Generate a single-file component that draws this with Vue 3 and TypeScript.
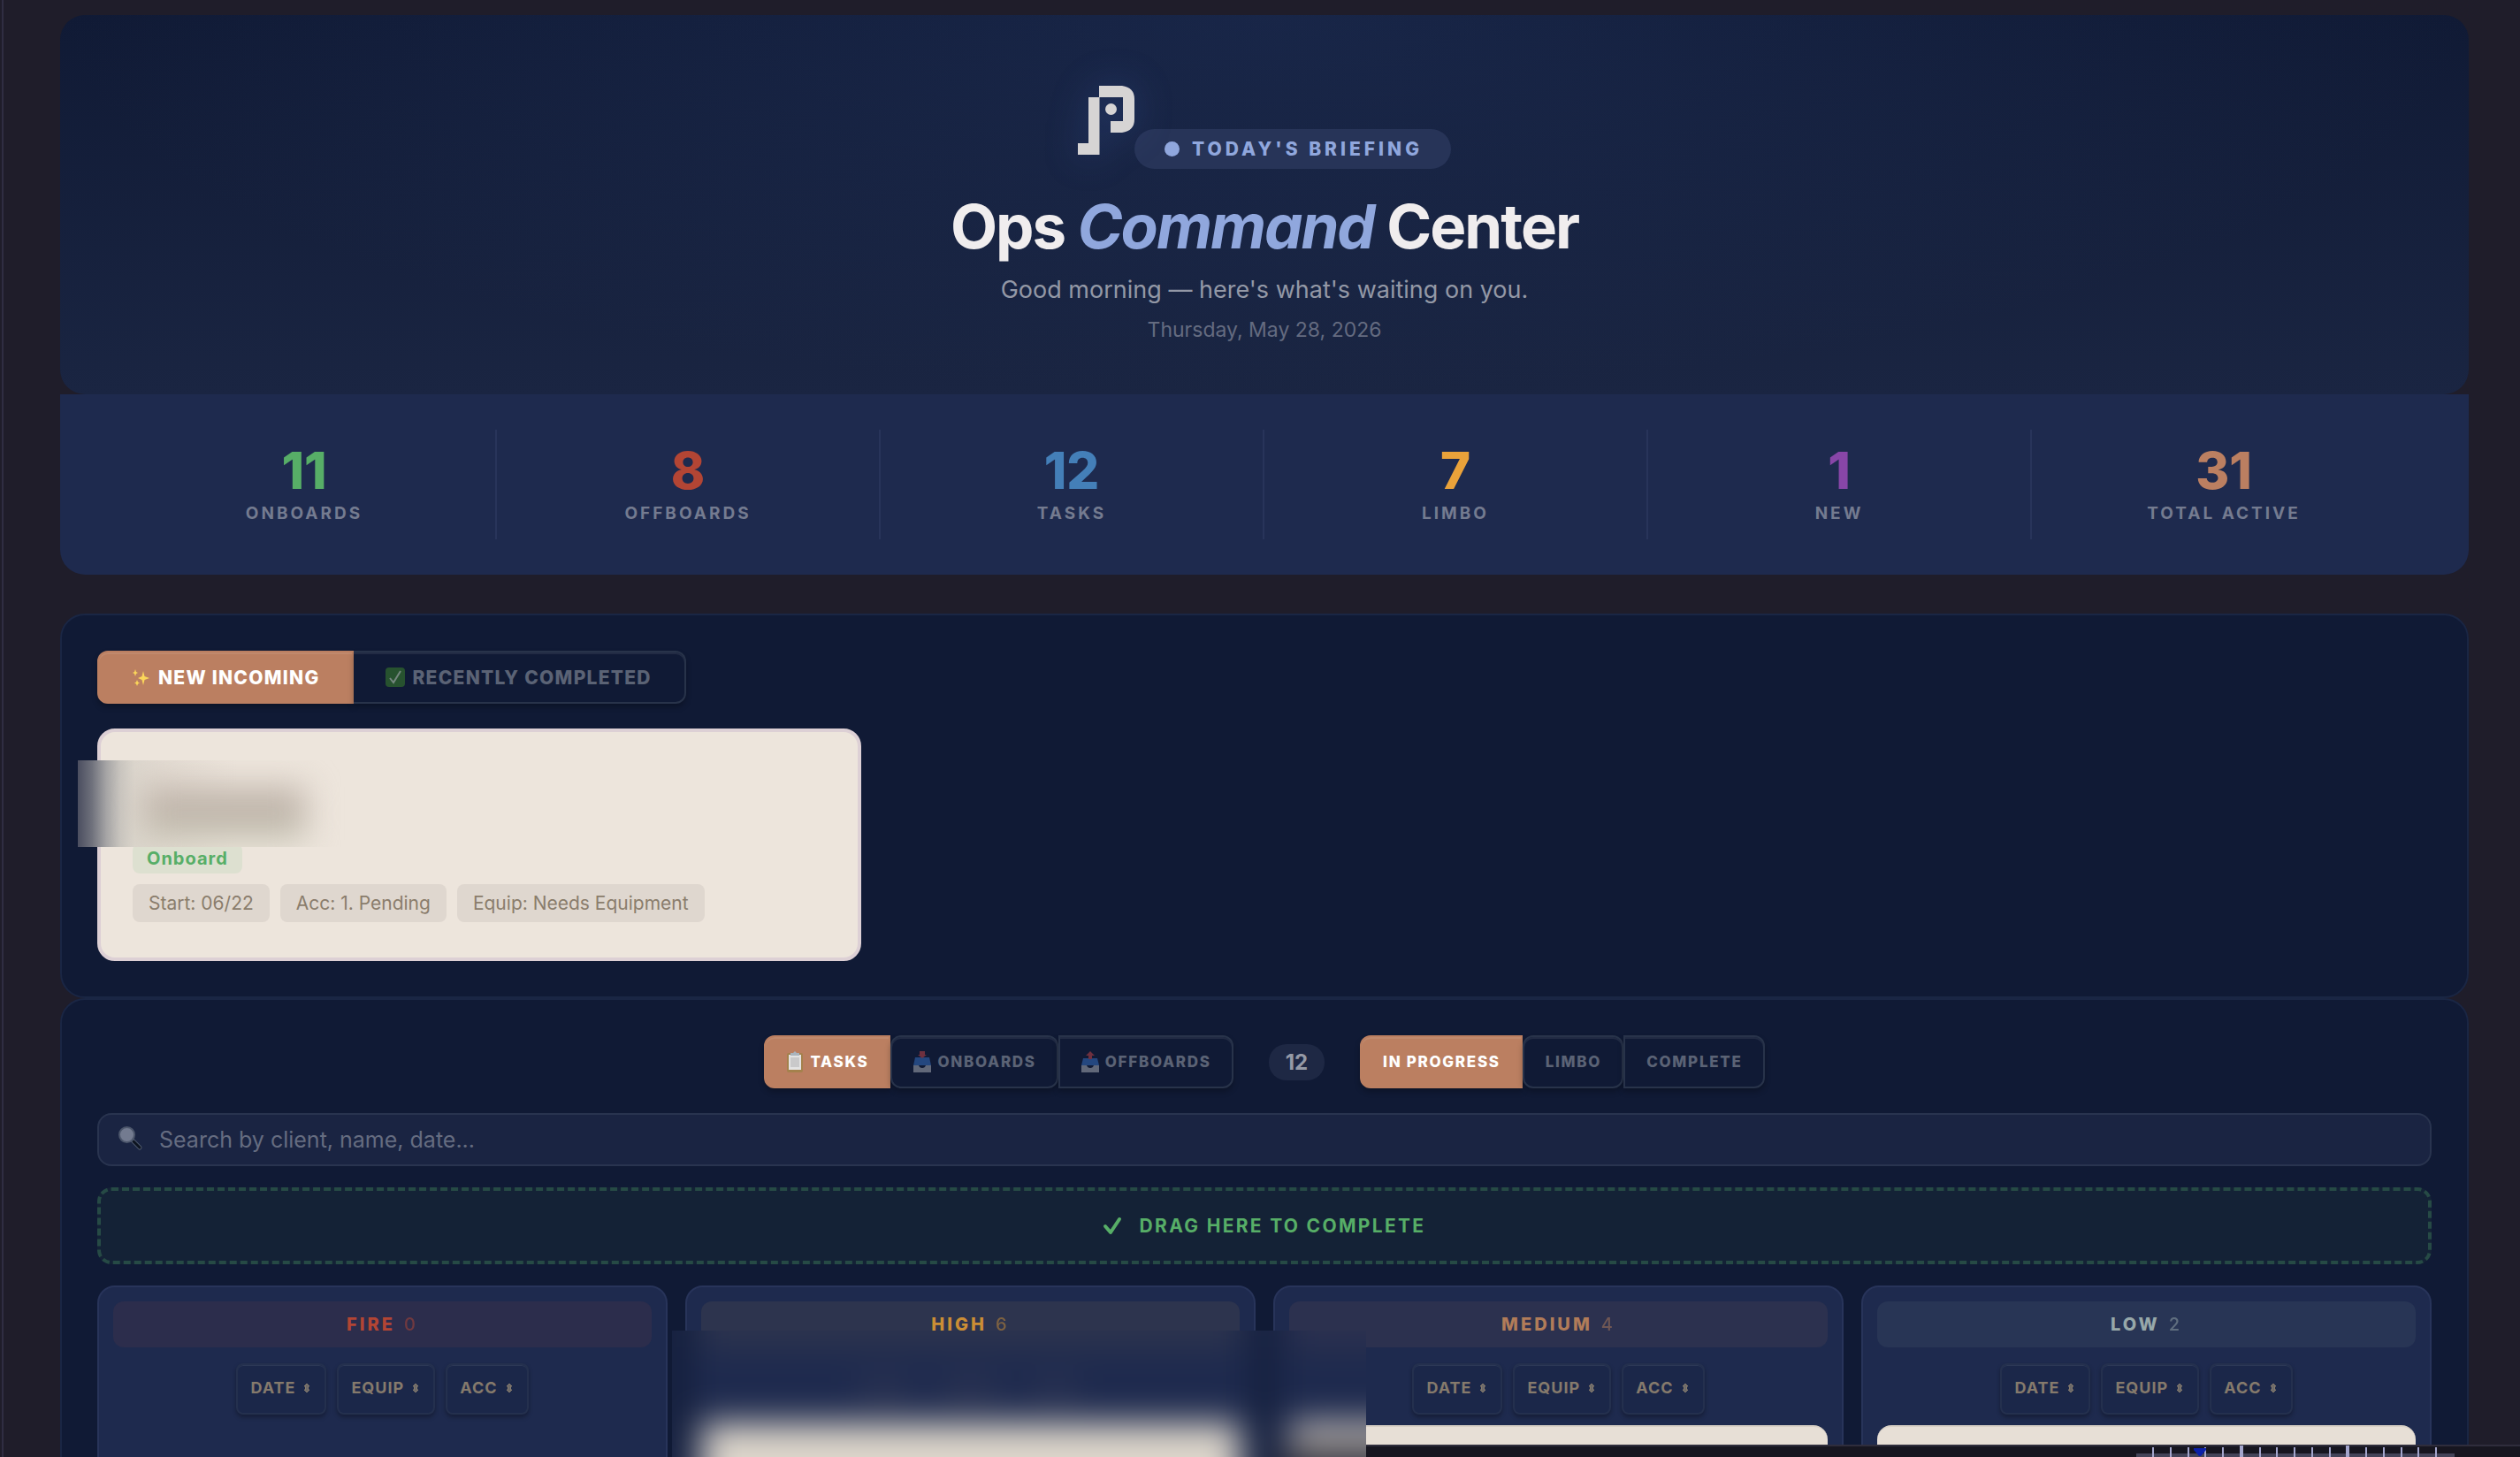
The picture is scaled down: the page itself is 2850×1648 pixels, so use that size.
<script setup lang="ts">
interface Stat { value: number; label: string; tone: string }
interface Column { name: string; count: number; tone: string; hasCard: boolean }

const stats: Stat[] = [
  { value: 11, label: 'ONBOARDS', tone: 'green' },
  { value: 8, label: 'OFFBOARDS', tone: 'red' },
  { value: 12, label: 'TASKS', tone: 'blue' },
  { value: 7, label: 'LIMBO', tone: 'amber' },
  { value: 1, label: 'NEW', tone: 'purple' },
  { value: 31, label: 'TOTAL ACTIVE', tone: 'copper' },
]
const details: string[] = ['Start: 06/22', 'Acc: 1. Pending', 'Equip: Needs Equipment']
const columns: Column[] = [
  { name: 'FIRE', count: 0, tone: 'fire', hasCard: false },
  { name: 'HIGH', count: 6, tone: 'high', hasCard: true },
  { name: 'MEDIUM', count: 4, tone: 'medium', hasCard: true },
  { name: 'LOW', count: 2, tone: 'low', hasCard: true },
]
const sorts: string[] = ['DATE', 'EQUIP', 'ACC']
const ticks: number[] = Array.from({ length: 17 }, (_, i) => i)
</script>

<template>
  <div class="page">
    <header class="hero">
      <div class="brand">
        <svg class="logo" viewBox="0 0 64 78" aria-hidden="true">
          <path d="M24 0H50Q64 2 64 15V38Q64 51 50 53H37V40H51V13H24Z" />
          <path d="M12 13H24.500V78H0V65H12Z" />
          <ellipse cx="37.500" cy="26.500" rx="6.500" ry="6.500" />
        </svg>
        <span class="briefing"><span class="dot"></span>TODAY'S BRIEFING</span>
      </div>
      <h1>Ops <em>Command</em> Center</h1>
      <p class="greeting">Good morning — here's what's waiting on you.</p>
      <p class="date">Thursday, May 28, 2026</p>
    </header>

    <section class="stats" aria-label="Totals">
      <div v-for="s in stats" :key="s.label" class="stat">
        <div class="value" :class="s.tone">{{ s.value }}</div>
        <div class="label">{{ s.label }}</div>
      </div>
    </section>

    <section class="panel incoming">
      <div class="tabs large">
        <button type="button" class="active">
          <svg class="ico-spark" viewBox="0 0 20 20" aria-hidden="true">
            <path fill="#fbd65a" d="M12 3L13.500 9L19 11L13.500 13L12 19L10.500 13L6 11L10.500 9ZM3 1L4 4L6 5L4 6L3 9L2 6L0 5L2 4ZM5 13L6 15.500L8 16.500L6 17.500L5 20L4 17.500L2 16.500L4 15.500Z" />
          </svg>NEW INCOMING</button>
        <button type="button">
          <svg class="ico-done" viewBox="0 0 22 22" aria-hidden="true">
            <rect width="22" height="22" rx="4" fill="#27522f" />
            <path d="M5 12L9 17L17 4" fill="none" stroke="#75867f" stroke-width="2" />
          </svg>RECENTLY COMPLETED</button>
      </div>
      <article class="client">
        <span class="kind">Onboard</span>
        <div class="details"><span v-for="d in details" :key="d">{{ d }}</span></div>
        <div class="veil"><div class="smudge"></div></div>
      </article>
    </section>

    <section class="panel board">
      <div class="controls">
        <div class="tabs">
          <button type="button" class="active">
            <svg class="ico-clip" viewBox="0 0 18 24" aria-hidden="true">
              <rect y="2" width="18" height="22" rx="2" fill="#a4814c" />
              <rect x="2" y="4" width="14" height="17" fill="#e3e3e3" />
              <rect x="4" y="7" width="10" height="11" fill="#c9c9ca" />
              <path d="M4 2H7L9 0L11 2H14V5H4Z" fill="#aab4bd" />
            </svg>TASKS</button>
          <button type="button">
            <svg class="ico-tray" viewBox="0 0 20 24" aria-hidden="true">
              <path d="M2 7H18L20 16H0Z" fill="#24477f" />
              <path d="M0 16H6Q7 19 10 19T14 16H20V24H0Z" fill="#616879" />
              <path d="M7 0H13V4H15L10 8L5 4H7Z" fill="#6e303f" />
            </svg>ONBOARDS</button>
          <button type="button">
            <svg class="ico-tray" viewBox="0 0 20 24" aria-hidden="true">
              <path d="M2 8H18L20 16H0Z" fill="#24477f" />
              <path d="M0 16H6Q7 19 10 19T14 16H20V24H0Z" fill="#616879" />
              <path d="M8 9V5H5L10 0L15 5H12V9Z" fill="#6e303f" />
            </svg>OFFBOARDS</button>
        </div>
        <span class="total">12</span>
        <div class="tabs">
          <button type="button" class="active">IN PROGRESS</button>
          <button type="button">LIMBO</button>
          <button type="button">COMPLETE</button>
        </div>
      </div>

      <label class="search">
        <svg class="ico-search" viewBox="0 0 26 26" aria-hidden="true">
          <path d="M16 16L24 24" stroke="#4d576c" stroke-width="5" stroke-linecap="round" />
          <path d="M17 17L24 24" stroke="#0d1420" stroke-width="3" stroke-linecap="round" />
          <circle cx="9.500" cy="9.500" r="8.500" fill="#737b90" stroke="#4d576c" stroke-width="2" />
        </svg>
        <input type="text" aria-label="Search" placeholder="Search by client, name, date..." />
      </label>

      <div class="drop">
        <svg class="ico-check" viewBox="0 0 20 20" aria-hidden="true">
          <path d="M2 10L8 17L18 2" fill="none" stroke="#57ae67" stroke-width="4" stroke-linecap="round" stroke-linejoin="round" />
        </svg>DRAG HERE TO COMPLETE
      </div>

      <div class="columns">
        <div v-for="c in columns" :key="c.name" class="column">
          <h2 :class="c.tone">{{ c.name }}<span>{{ c.count }}</span></h2>
          <div class="sorts">
            <button v-for="s in sorts" :key="s" type="button">{{ s }}
              <svg class="ico-sort" viewBox="0 0 8 12" aria-hidden="true">
                <path d="M4 2L7 5H5.500V9H7L4 12L1 9H2.500V5H1Z" fill="#6d6a69" stroke="currentColor" stroke-width="1" />
              </svg>
            </button>
          </div>
          <div v-if="c.hasCard" class="card"></div>
        </div>
      </div>
    </section>

    <div class="dock">
      <div class="ruler">
        <i v-for="t in ticks" :key="t" :class="{ major: t === 5 || t === 11 }"></i>
        <svg class="marker" viewBox="0 0 14 9" aria-hidden="true"><path d="M0 0H14V2L8 9H6L0 2Z" fill="#0c20a8" /></svg>
      </div>
    </div>
    <div class="board-veil"><div class="shapes"></div></div>
  </div>
</template>

<style>
body { background: #1f1d2a; overflow: hidden; }
</style>

<style scoped>
* { box-sizing: border-box; }
.page {
  position: relative;
  height: 100vh;
  overflow: hidden;
  padding: 17px 58px 0 64px;
  margin-left: 2px;
  border-left: 2px solid #2f2d42;
  background: #1f1d2a;
  font-family: Inter, "Liberation Sans", sans-serif;
}
h1, h2, p { margin: 0; }
button { font-family: inherit; }
svg { flex: none; overflow: visible; }

.hero {
  display: flex;
  flex-direction: column;
  align-items: center;
  padding: 80px 0 59px;
  border-radius: 28px;
  background:
    radial-gradient(ellipse 50% 100% at 50% 0, rgba(45, 68, 120, 0.28), rgba(45, 68, 120, 0) 100%),
    linear-gradient(180deg, #101a35, #1a2542);
}
.brand { display: flex; align-items: flex-end; }
.logo { width: 64px; height: 78px; margin-bottom: 16px; fill: #d6d4d4; filter: drop-shadow(0 0 20px rgba(80, 120, 220, 0.25)); }
.briefing {
  display: flex;
  align-items: center;
  height: 45px;
  padding: 0 32px 0 34px;
  border-radius: 24px;
  background: #273458;
  color: #90a7dd;
  font-size: 21px;
  font-weight: 800;
  letter-spacing: 4px;
}
.dot { width: 17px; height: 17px; margin-right: 14px; border-radius: 50%; background: #90a7dd; }
h1 { margin-top: 23px; font-size: 69px; line-height: 84px; font-weight: 700; letter-spacing: -2px; color: #f0edee; }
h1 em { color: #90a7dd; }
.greeting { margin-top: 12px; font-size: 27px; line-height: 36px; color: #9398a6; }
.date { margin-top: 13px; font-size: 23px; line-height: 28px; color: #646b80; }

.stats {
  display: grid;
  grid-template-columns: repeat(6, 1fr);
  padding: 40px 60px;
  border-radius: 0 0 28px 28px;
  background: #1e2a4e;
}
.stat { height: 124px; padding-top: 16px; text-align: center; border-right: 2px solid #28345a; }
.stat:last-child { border-right: 0; }
.value { font-size: 58px; line-height: 60px; font-weight: 800; }
.label { margin-top: 7px; font-size: 19px; line-height: 24px; font-weight: 700; letter-spacing: 3px; color: #747b90; }
.green { color: #57ae67; }
.red { color: #b34534; }
.blue { color: #447fb8; }
.amber { color: #eaa23a; }
.purple { color: #8846a8; }
.copper { color: #bb7f61; }

.panel { border: 2px solid #1a2644; border-radius: 28px; padding: 40px; background: #101a35; }
.incoming { margin-top: 44px; }

.tabs { display: flex; }
.tabs button {
  display: flex;
  align-items: center;
  height: 60px;
  padding: 0 23px 0 24px;
  border: 2px solid #28334a;
  border-radius: 12px;
  background: #101a35;
  box-shadow: 0 4px 6px rgba(0, 0, 0, 0.25), inset 0 2px 0 rgba(255, 255, 255, 0.08);
  color: #5b6375;
  font-size: 17px;
  font-weight: 800;
  letter-spacing: 0.1em;
}
.tabs button:first-child { border-radius: 12px 0 0 12px; }
.tabs button:last-child { border-radius: 0 12px 12px 0; }
.tabs button.active { border-color: #bb7f61; background: #bb7f61; color: #fff; }
.tabs.large button { padding: 0 37px 0 38px; font-size: 21px; letter-spacing: 0.06em; }
.tabs.large button:last-child { padding-left: 36px; border-left: 0; }
.ico-spark { width: 20px; height: 20px; margin-right: 9px; }
.ico-done { width: 22px; height: 22px; margin-right: 8px; }
.ico-clip { width: 18px; height: 24px; margin-right: 8px; }
.ico-tray { width: 20px; height: 24px; margin-right: 7px; }

.client {
  position: relative;
  width: 864px;
  max-width: 100%;
  margin-top: 28px;
  padding: 126px 36px 40px;
  border: 4px solid #ddd0d5;
  border-radius: 20px;
  background: #ede5dc;
}
.kind {
  display: block;
  width: max-content;
  padding: 0 16px;
  border-radius: 8px;
  background: #dde0d0;
  color: #57ae67;
  font-size: 20px;
  line-height: 34px;
  font-weight: 700;
  letter-spacing: 1px;
}
.details { display: flex; gap: 12px; margin-top: 12px; }
.details span { padding: 0 18px; border-radius: 8px; background: #dfd7cf; color: #8a7d6c; font-size: 21px; line-height: 43px; }
.veil {
  position: absolute;
  left: -26px;
  top: 32px;
  width: 340px;
  height: 98px;
  overflow: hidden;
  background: linear-gradient(90deg, #4b4e60 0, #6f717c 16px, #a5a4a5 32px, #c9c5bf 48px, #dcd6cd 64px, #e3dbd2 100px, #ede5dc 180px);
}
.smudge {
  width: 184px;
  height: 60px;
  margin: 30px 0 0 74px;
  background: linear-gradient(#c0b5ab 60%, #c8ccb8);
  filter: blur(18px);
}

.controls { display: flex; justify-content: center; align-items: center; gap: 40px; }
.total { padding: 0 19px; border-radius: 20px; background: #1e2844; color: #959aa6; font-size: 24px; line-height: 41px; font-weight: 700; }

.search {
  display: flex;
  align-items: center;
  height: 60px;
  margin-top: 28px;
  padding: 0 22px;
  border: 2px solid #29344f;
  border-radius: 16px;
  background: #1a2442;
}
.ico-search { width: 26px; height: 26px; margin: 0 20px 4px 0; }
.search input { flex: 1; padding: 0; border: 0; outline: 0; background: none; color: #fff; font-family: inherit; font-size: 25px; }
.search input::placeholder { color: #656c80; opacity: 1; }

.drop {
  display: flex;
  justify-content: center;
  align-items: center;
  height: 87px;
  margin-top: 24px;
  border: 4px dashed #264a45;
  border-radius: 16px;
  background: #142236;
  color: #57ae67;
  font-size: 21px;
  font-weight: 700;
  letter-spacing: 0.11em;
}
.ico-check { width: 20px; height: 20px; margin-right: 21px; }

.columns { display: grid; grid-template-columns: repeat(4, 1fr); gap: 20px; margin-top: 24px; }
.column { min-height: 260px; padding: 16px; border: 2px solid #28345a; border-radius: 20px; background: #1e2a4e; }
h2 {
  display: flex;
  justify-content: center;
  gap: 10px;
  border-radius: 12px;
  font-size: 20px;
  line-height: 52px;
  font-weight: 800;
  letter-spacing: 3px;
}
h2 span { font-weight: 500; opacity: 0.5; }
.fire { background: #2c2d4c; color: #b34534; }
.high { background: #2d344e; color: #cb8e35; }
.medium { background: #2c314f; color: #b17c59; }
.low { background: #283555; color: #97a8a9; }
.sorts { display: flex; justify-content: center; gap: 12px; margin-top: 18px; }
.sorts button {
  display: flex;
  align-items: center;
  gap: 9px;
  height: 58px;
  padding: 0 16px 4px 14px;
  border: 2px solid #24304e;
  border-radius: 8px;
  background: #1b2749;
  box-shadow: 0 3px 5px rgba(0, 0, 0, 0.3), inset 0 1px 0 #2c3856;
  color: #857a6c;
  font-size: 18px;
  font-weight: 700;
  letter-spacing: 1px;
}
.ico-sort { width: 8px; height: 12px; }
.card { height: 120px; margin-top: 12px; border-top: 2px solid #d8d0c6; border-radius: 16px; background: #e7dfd6; }

.dock {
  position: absolute;
  right: 0;
  bottom: 0;
  width: 1410px;
  height: 14px;
  border-top: 2px solid #2f2d3c;
  background: #171620;
}
.ruler {
  position: absolute;
  right: 74px;
  bottom: 0;
  display: flex;
  align-items: flex-end;
  justify-content: space-between;
  width: 360px;
  height: 13px;
  padding: 0 20px 0 18px;
  background: linear-gradient(transparent 9px, #444459 9px);
}
.ruler i { width: 2px; height: 11px; background: #a3a5cc; }
.ruler i.major { width: 4px; height: 13px; }
.marker { position: absolute; left: 65px; top: 3px; width: 14px; height: 9px; }

/* Frosted cover over the second column and the edge of the third */
.board-veil {
  position: absolute;
  left: 756px;
  bottom: 0;
  width: 785px;
  height: 143px;
  overflow: hidden;
  background: #1e2a4e;
}
.shapes {
  position: absolute;
  inset: -60px;
  background:
    linear-gradient(#ddd6cb, #ddd6cb) 94px 165px / 608px 200px no-repeat,
    linear-gradient(#d6cec6, #d6cec6) 759px 165px / 300px 24px no-repeat,
    linear-gradient(#3a3a44, #3a3a44) 750px 189px / 300px 100px no-repeat,
    linear-gradient(#2d344e, #2d344e) 94px 0 / 608px 79px no-repeat,
    linear-gradient(#2c314f, #2c314f) 759px 0 / 300px 79px no-repeat,
    linear-gradient(#2f3653, #2f3653) 272px 116px / 56px 22px no-repeat,
    linear-gradient(#2f3653, #2f3653) 364px 116px / 66px 22px no-repeat,
    linear-gradient(#2f3653, #2f3653) 470px 116px / 46px 22px no-repeat,
    linear-gradient(#101a35, #101a35) 50px 0 / 26px 400px no-repeat,
    linear-gradient(#101a35, #101a35) 720px 0 / 20px 400px no-repeat,
    #1e2a4e;
  filter: blur(19px);
}
</style>
